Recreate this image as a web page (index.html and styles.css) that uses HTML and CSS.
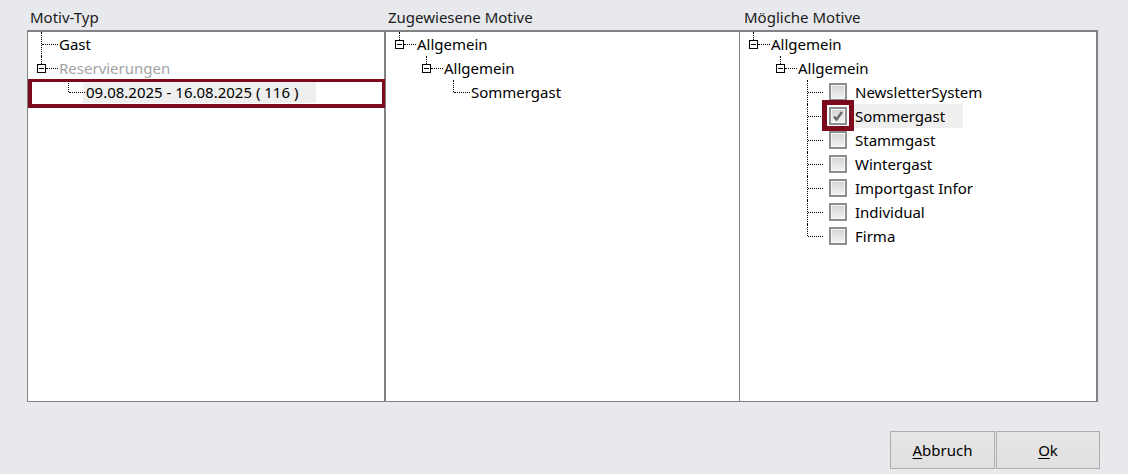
FILE: index.html
```html
<!DOCTYPE html>
<html lang="de">
<head>
    <meta charset="UTF-8">
    <title>Motive zuweisen</title>
    <link rel="stylesheet" href="styles.css">
</head>
<body>
    <div class="dialog">
        <div class="columns">
            <div class="col col-type">
                <div class="col-title">Motiv-Typ</div>
                <div class="tree">
                    <div class="row">
                        <span class="g tee"></span>
                        <span class="label">Gast</span>
                    </div>
                    <div class="row">
                        <span class="g box-end"><i class="box"></i></span>
                        <span class="label disabled">Reservierungen</span>
                    </div>
                    <div class="row">
                        <span class="g blank"></span>
                        <span class="g elbow"></span>
                        <span class="label selected">09.08.2025 - 16.08.2025 ( 116 )</span>
                    </div>
                    <div class="focus focus-type"></div>
                </div>
            </div>

            <div class="col col-assigned">
                <div class="col-title">Zugewiesene Motive</div>
                <div class="tree">
                    <div class="row">
                        <span class="g box-end"><i class="box"></i></span>
                        <span class="label">Allgemein</span>
                    </div>
                    <div class="row">
                        <span class="g blank"></span>
                        <span class="g box-end"><i class="box"></i></span>
                        <span class="label">Allgemein</span>
                    </div>
                    <div class="row">
                        <span class="g blank"></span>
                        <span class="g blank"></span>
                        <span class="g elbow"></span>
                        <span class="label">Sommergast</span>
                    </div>
                </div>
            </div>

            <div class="col col-possible">
                <div class="col-title">Mögliche Motive</div>
                <div class="tree">
                    <div class="row">
                        <span class="g box-end"><i class="box"></i></span>
                        <span class="label">Allgemein</span>
                    </div>
                    <div class="row">
                        <span class="g blank"></span>
                        <span class="g box-end"><i class="box"></i></span>
                        <span class="label">Allgemein</span>
                    </div>
                    <div class="row">
                        <span class="g blank"></span><span class="g blank"></span>
                        <span class="g tee short"></span>
                        <span class="check"></span>
                        <span class="label">NewsletterSystem</span>
                    </div>
                    <div class="row">
                        <span class="g blank"></span><span class="g blank"></span>
                        <span class="g tee short"></span>
                        <span class="check checked">
                            <svg width="14" height="14" viewBox="0 0 14 14"><path d="M3 7.5 L5.5 10.5 L11 3" fill="none" stroke="#6a6a6a" stroke-width="2.4"/></svg>
                        </span>
                        <span class="label selected">Sommergast</span>
                    </div>
                    <div class="row">
                        <span class="g blank"></span><span class="g blank"></span>
                        <span class="g tee short"></span>
                        <span class="check"></span>
                        <span class="label">Stammgast</span>
                    </div>
                    <div class="row">
                        <span class="g blank"></span><span class="g blank"></span>
                        <span class="g tee short"></span>
                        <span class="check"></span>
                        <span class="label">Wintergast</span>
                    </div>
                    <div class="row">
                        <span class="g blank"></span><span class="g blank"></span>
                        <span class="g tee short"></span>
                        <span class="check"></span>
                        <span class="label">Importgast Infor</span>
                    </div>
                    <div class="row">
                        <span class="g blank"></span><span class="g blank"></span>
                        <span class="g tee short"></span>
                        <span class="check"></span>
                        <span class="label">Individual</span>
                    </div>
                    <div class="row">
                        <span class="g blank"></span><span class="g blank"></span>
                        <span class="g elbow short"></span>
                        <span class="check"></span>
                        <span class="label">Firma</span>
                    </div>
                    <div class="focus focus-check"></div>
                </div>
            </div>
        </div>

        <div class="buttons">
            <button class="btn"><u>A</u>bbruch</button>
            <button class="btn"><u>O</u>k</button>
        </div>
    </div>
</body>
</html>
```

FILE: styles.css
```css
body {
    margin: 0;
    background-color: #e8e9ed;
    font-family: "Noto Sans", "Open Sans", sans-serif;
    font-size: 15px;
    color: #000;
}
.dialog {
    padding: 0 28px 0 27px;
}
.columns {
    display: flex;
}
.col-type {
    width: 358px;
}
.col-assigned {
    width: 354px;
}
.col-possible {
    width: 359px;
}
.col-title {
    height: 30px;
    line-height: 34px;
    padding-left: 3px;
    color: #1a1a1a;
    white-space: nowrap;
}
.col-possible .col-title {
    padding-left: 5px;
}
.tree {
    position: relative;
    height: 372px;
    box-sizing: border-box;
    background: #fff;
    border-top: 2px solid #828282;
    border-bottom: 1px solid #828282;
    border-left: 1px solid #828282;
}
.col-type .tree {
    border-right: 1px solid #828282;
}
.col-possible .tree {
    border-right: 2px solid #828282;
}
.row {
    display: flex;
    align-items: center;
    height: 24px;
    white-space: nowrap;
}

/* tree connector cells */
.g {
    position: relative;
    flex: none;
    width: 27px;
    height: 24px;
}
.g.tee,
.g.elbow,
.g.box-end {
    width: 31px;
}
.g.tee::before,
.g.elbow::before,
.g.box-end::before {
    content: "";
    position: absolute;
    left: 13px;
    top: 0;
    border-left: 1px dotted #000;
}
.g.tee::before {
    height: 24px;
}
.g.elbow::before {
    height: 12px;
}
.g.box-end::before {
    height: 8px;
}
.g.tee::after,
.g.elbow::after {
    content: "";
    position: absolute;
    left: 14px;
    top: 12px;
    width: 16px;
    border-top: 1px dotted #000;
}
.g.short::after {
    width: 15px;
}
.g.box-end::after {
    content: "";
    position: absolute;
    left: 18px;
    top: 12px;
    width: 12px;
    border-top: 1px dotted #000;
}
.box {
    position: absolute;
    left: 9px;
    top: 8px;
    width: 7px;
    height: 7px;
    border: 1px solid #000;
    background: #fff;
}
.box::after {
    content: "";
    position: absolute;
    left: 1px;
    top: 3px;
    width: 5px;
    border-top: 1px solid #000;
}

.label {
    line-height: 24px;
    padding-right: 18px;
}
.label.selected {
    background: #efefef;
    margin-left: -3px;
    padding-left: 3px;
}
.col-type .label.selected {
    line-height: 22px;
}
.disabled {
    color: #a3a3a3;
}

.check {
    flex: none;
    display: flex;
    align-items: center;
    justify-content: center;
    box-sizing: border-box;
    width: 18px;
    height: 18px;
    margin-left: 4px;
    margin-right: 8px;
    border: 2px solid #8e8e8e;
    box-shadow: inset 0 0 0 1px #f6f6f6;
    background: linear-gradient(#d4d4d4, #f3f3f3);
}

.focus {
    position: absolute;
    box-sizing: border-box;
    border: 4px solid #7d0a1c;
}
.focus-type {
    left: 0;
    top: 47px;
    width: 358px;
    height: 29px;
    border-top-width: 3px;
}
.focus-check {
    left: 82px;
    top: 68px;
    width: 32px;
    height: 31px;
    border-width: 5px;
}

.buttons {
    display: flex;
    justify-content: flex-end;
    gap: 1px;
    margin-top: 29px;
}
.btn {
    width: 105px;
    height: 38px;
    font-family: "Noto Sans", "Open Sans", sans-serif;
    font-size: 15px;
    color: #000;
    background: linear-gradient(#e6e6e6, #e0e0e0);
    border: 1px solid #adadad;
    border-radius: 0;
    padding: 0;
}
.btn + .btn {
    width: 104px;
}
.btn u {
    text-underline-offset: 2px;
}
```
